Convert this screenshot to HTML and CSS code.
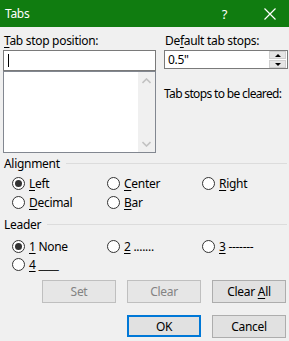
FILE: index.html
```html
<!DOCTYPE html>
<html lang="en">
<head>
    <meta charset="UTF-8">
    <link rel="stylesheet" href="styles.css">
    <title>Tabs</title>
</head>
<body>
    <div class="titlebar">
        <span class="title">Tabs</span>
        <span class="help">?</span>
        <svg class="close" width="12" height="12" viewBox="0 0 12 12">
            <path d="M0.5 0.5 L11.5 11.5 M11.5 0.5 L0.5 11.5" stroke="#fff" stroke-width="1.2"/>
        </svg>
    </div>

    <div class="dialog">
        <div class="top">
            <div class="col">
                <label class="lbl"><u>T</u>ab stop position:</label>
                <div class="input"><span class="caret"></span></div>
                <div class="list">
                    <div class="scroll">
                        <svg width="9" height="6" viewBox="0 0 9 6"><path d="M0.5 5 L4.5 1 L8.5 5" fill="none" stroke="#c2c2c2" stroke-width="1.6"/></svg>
                        <svg width="9" height="6" viewBox="0 0 9 6"><path d="M0.5 1 L4.5 5 L8.5 1" fill="none" stroke="#c2c2c2" stroke-width="1.6"/></svg>
                    </div>
                </div>
            </div>
            <div class="col">
                <label class="lbl">De<u>f</u>ault tab stops:</label>
                <div class="spin">
                    <span class="value">0.5"</span>
                    <div class="arrows">
                        <span class="arr"><i class="up"></i></span>
                        <span class="arr"><i class="down"></i></span>
                    </div>
                </div>
                <div class="cleared">Tab stops to be cleared:</div>
            </div>
        </div>

        <div class="group">
            <div class="legend"><span>Alignment</span><span class="rule"></span></div>
            <div class="options">
                <div class="opt"><span class="radio on"></span><u>L</u>eft</div>
                <div class="opt"><span class="radio"></span><u>C</u>enter</div>
                <div class="opt"><span class="radio"></span><u>R</u>ight</div>
                <div class="opt"><span class="radio"></span><u>D</u>ecimal</div>
                <div class="opt"><span class="radio"></span><u>B</u>ar</div>
            </div>
        </div>

        <div class="group leader">
            <div class="legend"><span>Leader</span><span class="rule"></span></div>
            <div class="options">
                <div class="opt"><span class="radio on"></span><u>1</u>&nbsp;None</div>
                <div class="opt"><span class="radio"></span><u>2</u>&nbsp;.......</div>
                <div class="opt"><span class="radio"></span><u>3</u>&nbsp;-------</div>
                <div class="opt"><span class="radio"></span><u>4</u>&nbsp;____</div>
            </div>
        </div>

        <div class="buttons">
            <button class="btn off">Set</button>
            <button class="btn off">Clear</button>
            <button class="btn">Clear <u>A</u>ll</button>
        </div>
        <div class="buttons bottom">
            <button class="btn default">OK</button>
            <button class="btn">Cancel</button>
        </div>
    </div>
</body>
</html>
```

FILE: styles.css
```css
*{
    margin:0;
    padding:0;
    box-sizing:border-box;
}
body{
    width:289px;
    height:341px;
    overflow:hidden;
    background:#f0f0f0;
    font-family:"Noto Sans", "DejaVu Sans", sans-serif;
    font-size:12px;
    letter-spacing:-0.3px;
    color:#000;
}
u{
    text-decoration:underline;
    text-underline-offset:2px;
}

/* title bar */
.titlebar{
    height:27px;
    background:#107c10;
    color:#fff;
    display:flex;
    align-items:center;
    padding-left:5px;
}
.title{
    flex:1;
    font-size:12px;
}
.help{
    font-size:13px;
    margin-right:37px;
}
.close{
    margin-right:13px;
}

/* top area */
.dialog{
    padding:6px 2px 0 3px;
}
.top{
    display:grid;
    grid-template-columns:153px 124px;
    column-gap:8px;
}
.lbl{
    display:block;
    height:17px;
    line-height:16px;
    padding-left:1px;
    white-space:nowrap;
}
.input{
    height:21px;
    background:#fff;
    border:1px solid #7a7a7a;
    padding:3px 0 0 4px;
}
.caret{
    display:block;
    width:1px;
    height:13px;
    background:#000;
}
.list{
    height:82px;
    background:#fff;
    border:1px solid #828790;
    display:flex;
    justify-content:flex-end;
}
.scroll{
    width:17px;
    background:#f0f0f0;
    display:flex;
    flex-direction:column;
    justify-content:space-between;
    align-items:center;
    padding:6px 0 5px;
}
.spin{
    height:19px;
    background:#fff;
    border:1px solid #7a7a7a;
    display:flex;
    align-items:center;
}
.value{
    flex:1;
    padding-left:3px;
}
.arrows{
    width:17px;
    height:17px;
    display:flex;
    flex-direction:column;
    gap:1px;
    margin-right:1px;
}
.arr{
    flex:1;
    background:#e5e5e5;
    border:1px solid #cfcfcf;
    display:flex;
    align-items:center;
    justify-content:center;
}
.arr i{
    width:0;
    height:0;
    border-left:3px solid transparent;
    border-right:3px solid transparent;
}
.arr .up{
    border-bottom:3px solid #000;
}
.arr .down{
    border-top:3px solid #000;
}
.cleared{
    margin-top:16px;
    line-height:17px;
    white-space:nowrap;
    letter-spacing:-0.65px;
}

/* option groups */
.group{
    margin-top:2px;
}
.legend{
    display:flex;
    align-items:center;
    height:17px;
    padding-left:1px;
}
.rule{
    flex:1;
    height:1px;
    background:#dcdcdc;
    margin-left:6px;
}
.options{
    display:grid;
    grid-template-columns:95px 95px 95px;
    padding-left:9px;
    margin-top:2px;
}
.opt{
    height:19px;
    display:flex;
    align-items:center;
}
.radio{
    width:13px;
    height:13px;
    border:1px solid #333;
    border-radius:50%;
    background:#fff;
    margin-right:4px;
    display:flex;
    align-items:center;
    justify-content:center;
}
.radio.on::after{
    content:"";
    width:7px;
    height:7px;
    border-radius:50%;
    background:#333;
}
.leader{
    margin-top:4px;
}
.leader .options{
    margin-top:4px;
}
.leader .opt{
    height:18px;
}

/* buttons */
.buttons{
    display:flex;
    justify-content:flex-end;
    gap:11px;
    padding-right:1px;
    margin-top:7px;
}
.buttons.bottom{
    margin-top:12px;
}
.btn{
    width:74px;
    height:23px;
    background:#e1e1e1;
    border:1px solid #adadad;
    font-family:inherit;
    font-size:12px;
    letter-spacing:-0.3px;
    color:#000;
}
.btn.off{
    color:#838383;
    border-color:#bfbfbf;
    background:#e6e6e6;
}
.btn.default{
    border:2px solid #0078d7;
    height:22px;
}
```
